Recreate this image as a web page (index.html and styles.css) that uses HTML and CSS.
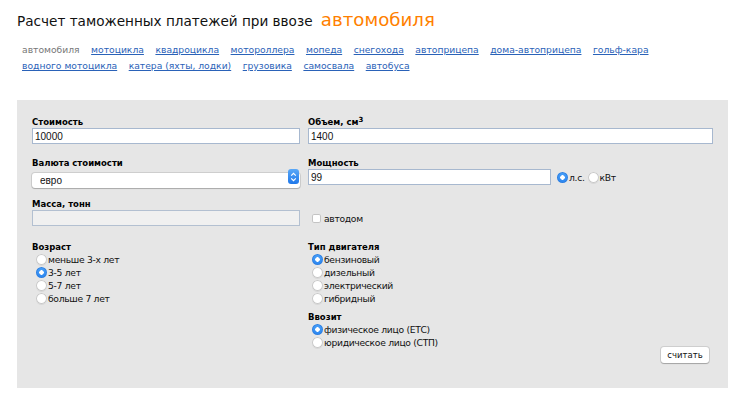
FILE: index.html
```html
<!DOCTYPE html>
<html lang="ru">
<head>
<meta charset="utf-8">
<title>Расчет таможенных платежей</title>
<link rel="stylesheet" href="styles.css">
</head>
<body>
<div class="page">
  <h1 class="title">Расчет таможенных платежей при ввозе <span class="accent">автомобиля</span></h1>
  <nav class="types">
    <span class="current">автомобиля</span>
    <a href="#">мотоцикла</a>
    <a href="#">квадроцикла</a>
    <a href="#">мотороллера</a>
    <a href="#">мопеда</a>
    <a href="#">снегохода</a>
    <a href="#">автоприцепа</a>
    <a href="#">дома-автоприцепа</a>
    <a href="#">гольф-кара</a>
    <a href="#">водного мотоцикла</a>
    <a href="#">катера (яхты, лодки)</a>
    <a href="#">грузовика</a>
    <a href="#">самосвала</a>
    <a href="#">автобуса</a>
  </nav>
  <form class="panel">
    <div class="field">
      <label class="lbl">Стоимость</label>
      <input class="inp" type="text" value="10000">
    </div>
    <div class="field">
      <label class="lbl">Объем, см<sup>3</sup></label>
      <input class="inp" type="text" value="1400">
    </div>
    <div class="field">
      <label class="lbl">Валюта стоимости</label>
      <div class="select">
        <select><option>евро</option></select>
        <span class="stepper"><svg width="11" height="14" viewBox="0 0 11 14"><path d="M3.2 5.6 L5.5 3.4 L7.8 5.6 M3.2 8.4 L5.5 10.6 L7.8 8.4" fill="none" stroke="#fff" stroke-width="1.2"/></svg></span>
      </div>
    </div>
    <div class="field">
      <label class="lbl">Мощность</label>
      <div class="power">
        <input class="inp inp-power" type="text" value="99">
        <label class="unit"><input class="radio" type="radio" name="pw" checked>л.с.</label>
        <label class="unit"><input class="radio" type="radio" name="pw">кВт</label>
      </div>
    </div>
    <div class="field">
      <label class="lbl">Масса, тонн</label>
      <input class="inp inp-off" type="text" value="">
    </div>
    <div class="field check-field">
      <label class="check"><input class="box" type="checkbox">автодом</label>
    </div>
    <div class="field group">
      <div class="lbl">Возраст</div>
      <label class="opt"><input class="radio" type="radio" name="age">меньше 3-х лет</label>
      <label class="opt"><input class="radio" type="radio" name="age" checked>3-5 лет</label>
      <label class="opt"><input class="radio" type="radio" name="age">5-7 лет</label>
      <label class="opt"><input class="radio" type="radio" name="age">больше 7 лет</label>
    </div>
    <div class="field group">
      <div class="lbl">Тип двигателя</div>
      <label class="opt"><input class="radio" type="radio" name="eng" checked>бензиновый</label>
      <label class="opt"><input class="radio" type="radio" name="eng">дизельный</label>
      <label class="opt"><input class="radio" type="radio" name="eng">электрический</label>
      <label class="opt"><input class="radio" type="radio" name="eng">гибридный</label>
      <div class="lbl lbl-sub">Ввозит</div>
      <label class="opt"><input class="radio" type="radio" name="who" checked>физическое лицо (ЕТС)</label>
      <label class="opt"><input class="radio" type="radio" name="who">юридическое лицо (СТП)</label>
      <div class="actions"><button class="btn" type="button">считать</button></div>
    </div>
  </form>
</div>
</body>
</html>
```

FILE: styles.css
```css
html, body {
  margin: 0;
  padding: 0;
  background: #fff;
}
body {
  font-family: "DejaVu Sans", Verdana, sans-serif;
  color: #000;
}
.page {
  padding: 7px 17px 0 17px;
}
.title {
  margin: 0;
  font-weight: normal;
  font-size: 13.6px;
  line-height: 26px;
  color: #111;
}
.accent {
  color: #ff7f00;
  font-size: 18.2px;
  margin-left: 4px;
}
.types {
  margin-top: 8px;
  padding-left: 5px;
  font-size: 9.2px;
  line-height: 16px;
  width: 650px;
  display: flex;
  flex-wrap: wrap;
  column-gap: 11.5px;
}
.types a,
.types .current {
  white-space: nowrap;
}
.types a {
  color: #2a62b8;
  text-decoration: underline;
}
.types .current {
  color: #777;
}
.panel {
  margin-top: 26px;
  width: 711px;
  box-sizing: border-box;
  background: #e6e6e6;
  padding: 16px 15px 25px 15px;
  display: grid;
  grid-template-columns: 268px 405px;
  column-gap: 8px;
  row-gap: 13px;
}
.field {
  display: flex;
  flex-direction: column;
}
.lbl {
  font-size: 8.5px;
  font-weight: bold;
  line-height: 12px;
  height: 12px;
}
.lbl sup {
  font-size: 7px;
  line-height: 0;
  vertical-align: 3px;
}
.inp {
  box-sizing: border-box;
  height: 16px;
  width: 100%;
  margin: 0;
  border: 1px solid #a7b8cf;
  background: #fff;
  font-family: "Liberation Sans", Arial, sans-serif;
  font-size: 10px;
  padding: 0 2px;
  color: #111;
  outline: none;
}
.inp-off {
  background: #f0f0f0;
  border-color: #b3c0d1;
}
.select {
  position: relative;
  height: 15px;
}
.select select {
  -webkit-appearance: none;
  appearance: none;
  box-sizing: border-box;
  width: 100%;
  height: 15px;
  margin: 0;
  border: none;
  border-radius: 3px;
  background: #fff;
  box-shadow: 0 0 0 1px rgba(0,0,0,0.10), 0 1px 1px rgba(0,0,0,0.18);
  font-family: "Liberation Sans", Arial, sans-serif;
  font-size: 10px;
  padding: 0 0 0 8px;
  color: #111;
  outline: none;
}
.stepper {
  position: absolute;
  right: 1px;
  top: 0;
  width: 11px;
  height: 15px;
  border-radius: 3px;
  background: linear-gradient(#5aa8f7, #1f78ea);
  display: flex;
  align-items: center;
  justify-content: center;
  pointer-events: none;
}
.stepper svg {
  display: block;
}
.power {
  display: flex;
  align-items: center;
  height: 16px;
}
.inp-power {
  width: 243px;
  flex: none;
}
.unit {
  display: flex;
  align-items: center;
  font-size: 9.2px;
  letter-spacing: -0.3px;
  color: #111;
}
.unit:first-of-type {
  margin-left: 6px;
}
.unit + .unit {
  margin-left: 3px;
}
.radio {
  -webkit-appearance: none;
  appearance: none;
  width: 11px;
  height: 11px;
  margin: 0 1px 0 0;
  border-radius: 50%;
  background: #fff;
  box-shadow: inset 0 0 0 1px #c9c9c9, 0 1px 0 rgba(0,0,0,0.06);
  flex: none;
}
.radio:checked {
  background: radial-gradient(circle, #fff 0 2px, transparent 2.5px), linear-gradient(#4aa0f8, #2a86f0);
  box-shadow: inset 0 0 0 1px #2f7fe0;
}
.check-field {
  padding-top: 12px;
}
.check {
  display: flex;
  align-items: center;
  height: 16px;
  font-size: 9.2px;
  letter-spacing: -0.3px;
  color: #111;
  padding-left: 4px;
}
.box {
  -webkit-appearance: none;
  appearance: none;
  width: 9px;
  height: 9px;
  margin: 0 3px 0 0;
  border-radius: 2px;
  background: #fff;
  box-shadow: inset 0 0 0 1px #c4c4c4;
}
.group {
  margin-top: 2px;
}
.opt {
  display: flex;
  align-items: center;
  height: 13px;
  font-size: 9.2px;
  letter-spacing: -0.3px;
  color: #111;
  padding-left: 4px;
}
.lbl-sub {
  margin-top: 6px;
}
.actions {
  display: flex;
  justify-content: flex-end;
  margin-top: -2px;
  padding-right: 4px;
}
.btn {
  box-sizing: border-box;
  width: 48px;
  height: 16px;
  margin: 0;
  padding: 0;
  border: none;
  border-radius: 3px;
  background: #fff;
  box-shadow: 0 0 0 1px rgba(0,0,0,0.10), 0 1px 1px rgba(0,0,0,0.2);
  font-family: "DejaVu Sans", Verdana, sans-serif;
  font-size: 8.5px;
  color: #111;
}
```
